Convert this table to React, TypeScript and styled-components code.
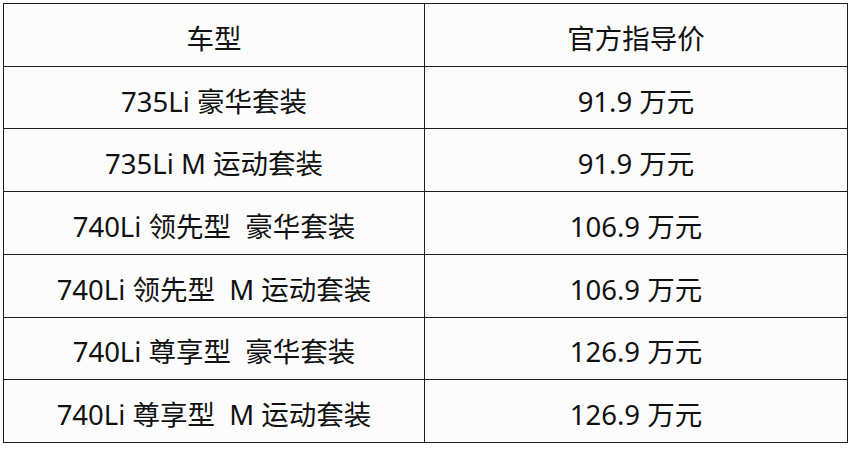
import React from "react";
import styled, { createGlobalStyle } from "styled-components";

const GlobalStyle = createGlobalStyle`
  html, body {
    margin: 0;
    padding: 0;
    background: #ffffff;
  }

  body {
    font-family: "Noto Sans", "Noto Sans CJK SC", sans-serif;
  }
`;

interface IRow {
  model: string;
  price: string;
}

const rows: IRow[] = [
  { model: "735Li 豪华套装", price: "91.9 万元" },
  { model: "735Li M 运动套装", price: "91.9 万元" },
  { model: "740Li 领先型  豪华套装", price: "106.9 万元" },
  { model: "740Li 领先型  M 运动套装", price: "106.9 万元" },
  { model: "740Li 尊享型  豪华套装", price: "126.9 万元" },
  { model: "740Li 尊享型  M 运动套装", price: "126.9 万元" },
];

const App: React.FC = () => {
  return (
    <>
      <GlobalStyle />
      <Page>
        <Table>
          <Cell>车型</Cell>
          <Cell>官方指导价</Cell>
          {rows.map((row, index) => (
            <React.Fragment key={index}>
              <Cell>{row.model}</Cell>
              <Cell>{row.price}</Cell>
            </React.Fragment>
          ))}
        </Table>
      </Page>
    </>
  );
};

export default App;

const Page = styled.div`
  width: 852px;
  height: 450px;
  padding: 3px 0 0 3px;
  box-sizing: border-box;
  background: #ffffff;
`;

const Table = styled.div`
  width: 845px;
  height: 440px;
  box-sizing: border-box;

  display: grid;
  grid-template-columns: 421px 1fr;
  grid-template-rows: repeat(7, 1fr);

  border-left: 1.5px solid #1e1e1e;
  border-top: 1.5px solid #1e1e1e;

  background: #fcfcfd;
`;

const Cell = styled.div`
  display: flex;
  align-items: center;
  justify-content: center;

  padding-top: 4px;

  border-right: 1.5px solid #1e1e1e;
  border-bottom: 1.5px solid #1e1e1e;

  color: #111111;
  font-size: 27.5px;
  white-space: pre;
`;
